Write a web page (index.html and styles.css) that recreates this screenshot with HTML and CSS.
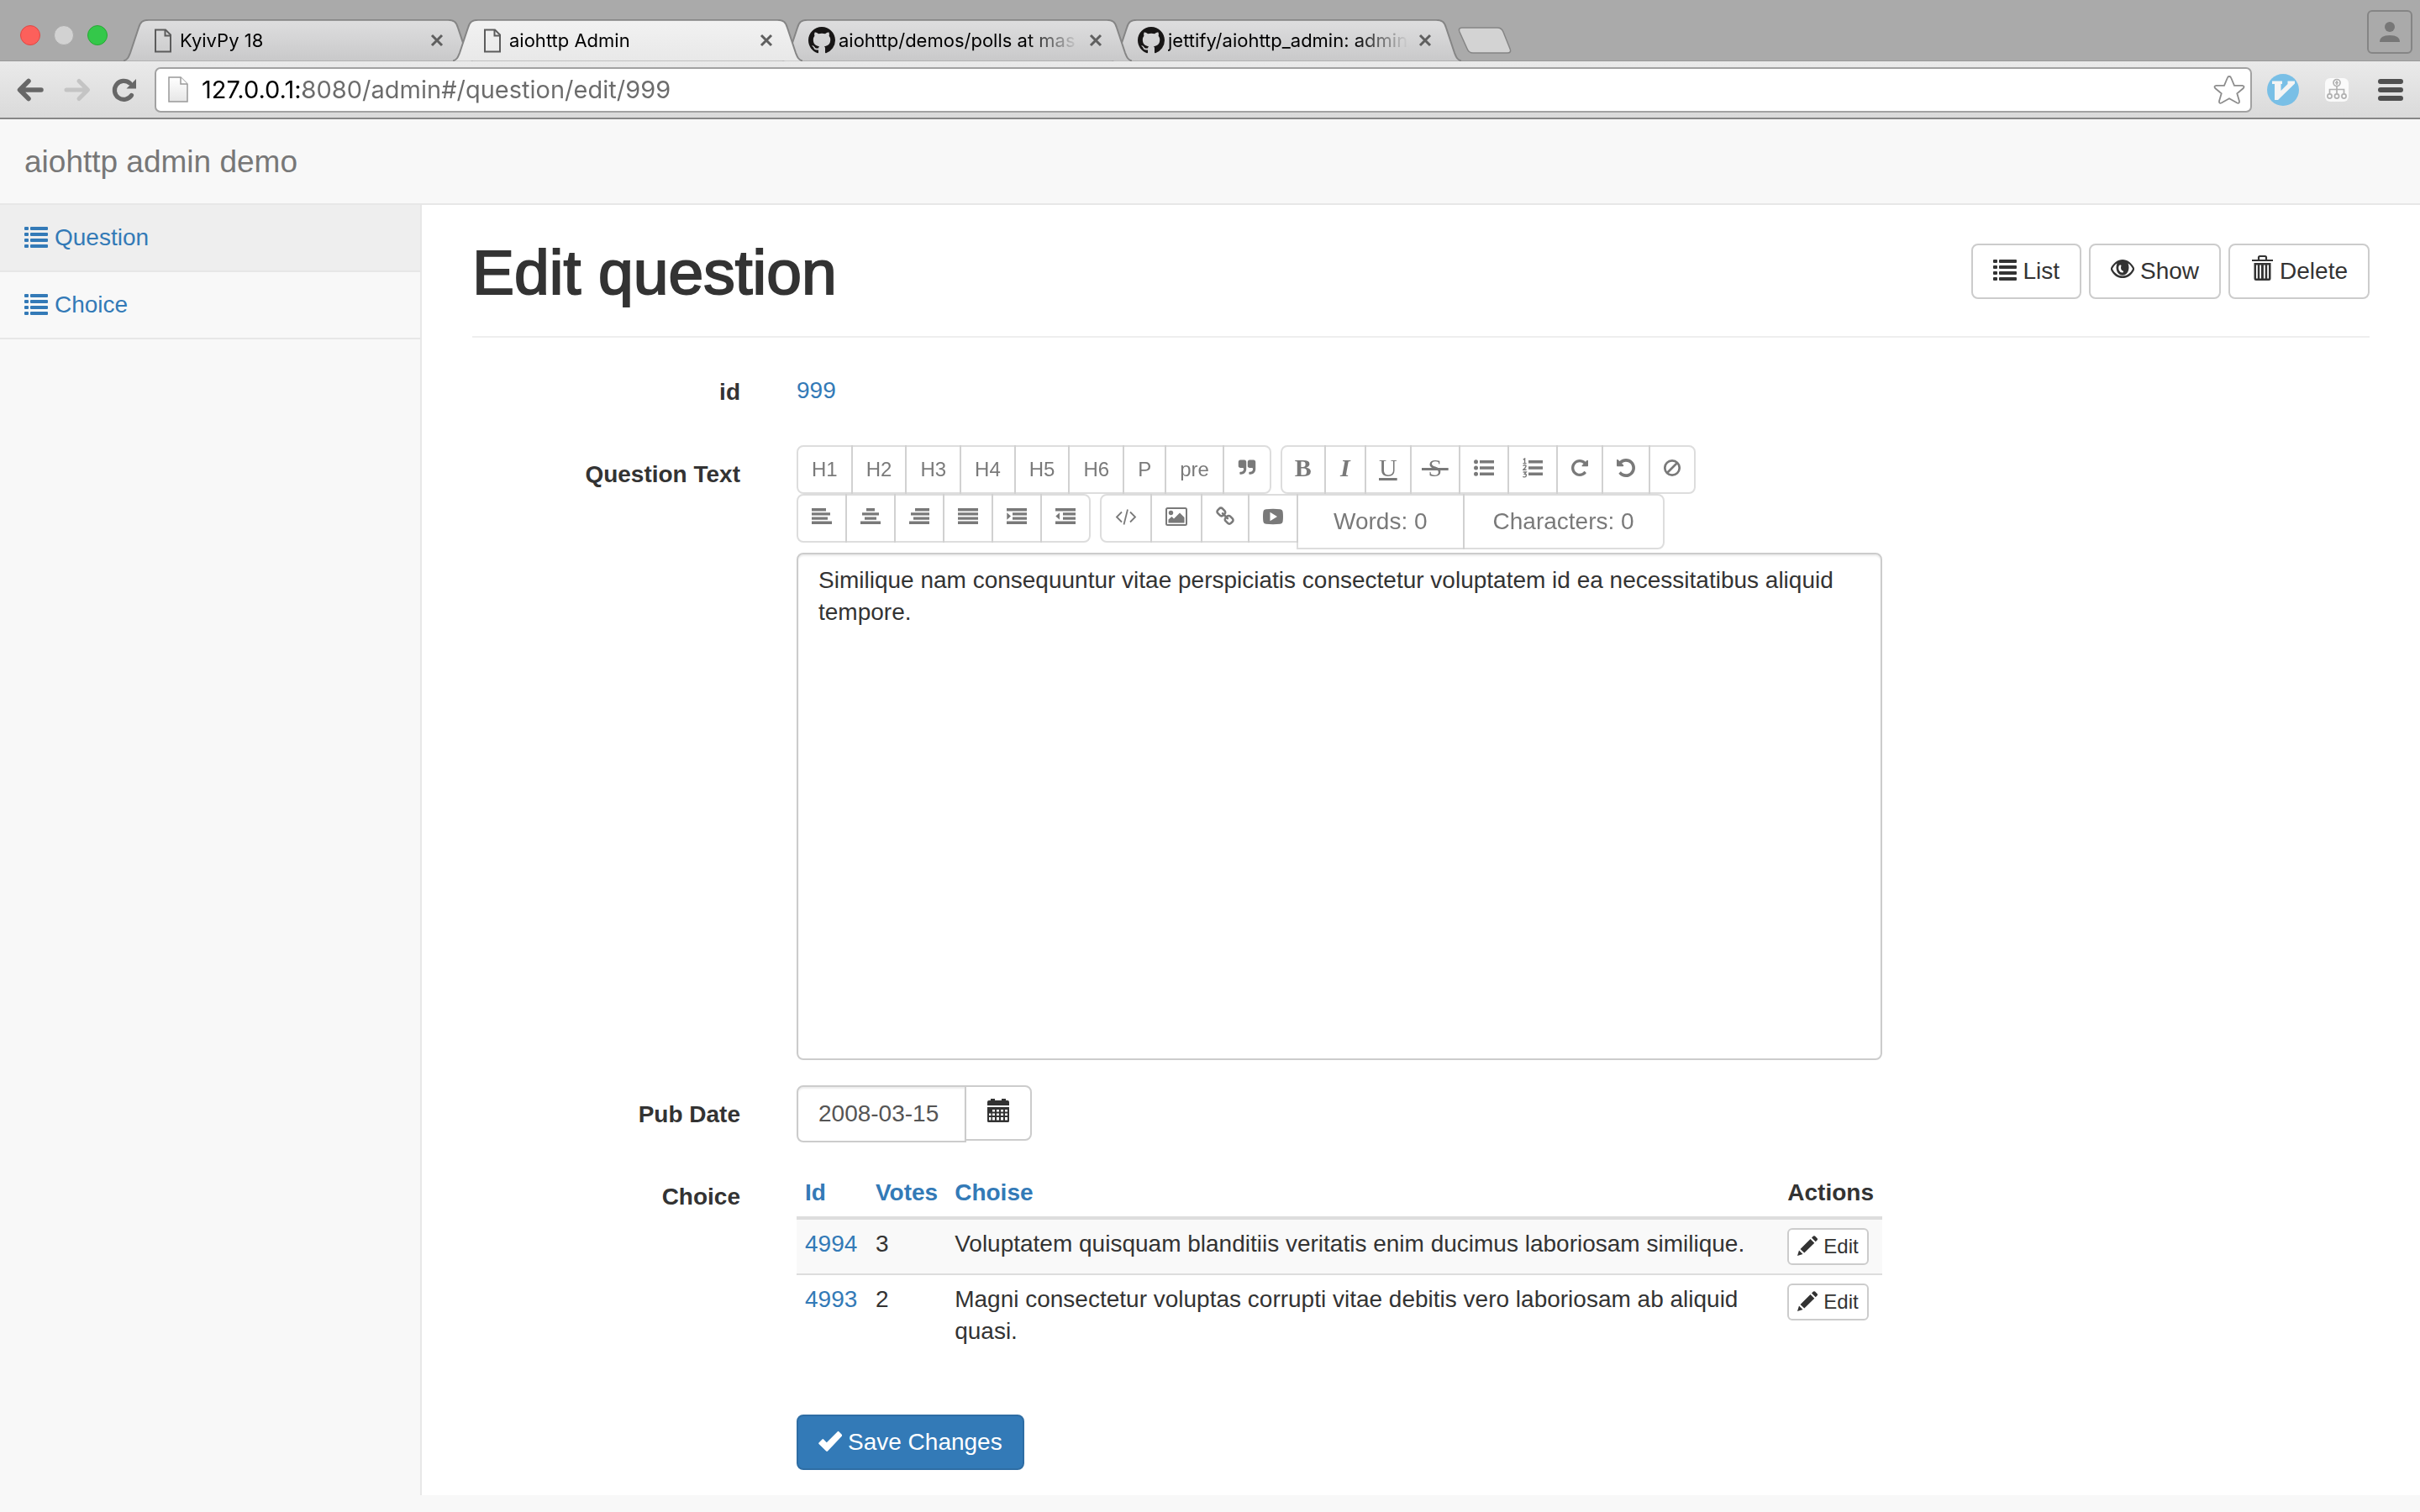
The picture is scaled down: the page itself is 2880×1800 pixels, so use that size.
FILE: index.html
```html
<!DOCTYPE html>
<html lang="en">
<head>
<meta charset="utf-8">
<title>aiohttp Admin</title>
<link rel="stylesheet" href="styles.css">
</head>
<body>
<svg class="defs" aria-hidden="true">
  <defs>
    <linearGradient id="tab-idle" x1="0" y1="0" x2="0" y2="1"><stop offset="0" stop-color="#dededf"/><stop offset="1" stop-color="#c9c9ca"/></linearGradient>
    <linearGradient id="tab-on" x1="0" y1="0" x2="0" y2="1"><stop offset="0" stop-color="#f2f2f2"/><stop offset="1" stop-color="#e8e8e8"/></linearGradient>
    <linearGradient id="sheet" x1="0" y1="0" x2="0" y2="1"><stop offset="0" stop-color="#fff"/><stop offset="1" stop-color="#e6e6e6"/></linearGradient>
  </defs>
  <symbol id="tab-shape" viewBox="0 0 416 50"><path d="M0 49.500C5 48 6 45 8 40L18 10C20 3 23 .8 30 .8H386C393 .8 396 3 398 10L408 40C410 45 411 48 416 49.500"/></symbol>
  <symbol id="page" viewBox="0 0 32 32"><path d="M7 3.500h12l6 6v20H7z" fill="none" stroke="#5c5c5c" stroke-width="2"/><path d="M18.500 4v6.500H25" fill="none" stroke="#5c5c5c" stroke-width="2"/></symbol>
  <symbol id="github" viewBox="0 0 16 16"><path fill="#181616" d="M8 0C3.580 0 0 3.580 0 8c0 3.540 2.290 6.530 5.470 7.590.4.07.55-.17.55-.38 0-.19-.01-.82-.01-1.490-2.010.37-2.530-.49-2.690-.94-.09-.23-.48-.94-.82-1.130-.28-.15-.68-.52-.01-.53.63-.01 1.080.58 1.230.82.72 1.210 1.870.87 2.330.66.07-.52.28-.87.51-1.070-1.780-.2-3.640-.89-3.640-3.950 0-.87.31-1.590.82-2.150-.08-.2-.36-1.020.08-2.120 0 0 .67-.21 2.200.82.64-.18 1.320-.27 2-.27s1.360.09 2 .27c1.530-1.040 2.200-.82 2.200-.82.44 1.100.16 1.920.08 2.120.51.56.82 1.270.82 2.150 0 3.070-1.870 3.750-3.650 3.950.29.25.54.73.54 1.480 0 1.070-.01 1.930-.01 2.200 0 .21.15.46.55.38A8.010 8.010 0 0 0 16 8c0-4.420-3.580-8-8-8z"/></symbol>
  <symbol id="close" viewBox="0 0 16 16"><path d="M2 2l12 12M14 2L2 14" stroke="#5f5f5f" stroke-width="3" fill="none"/></symbol>
  <symbol id="list" viewBox="0 0 28 28"><path d="M1 1h3a1 1 0 0 1 1 1v2a1 1 0 0 1-1 1H1a1 1 0 0 1-1-1V2a1 1 0 0 1 1-1zM8 1h19a1 1 0 0 1 1 1v2a1 1 0 0 1-1 1H8a1 1 0 0 1-1-1V2a1 1 0 0 1 1-1zM1 8h3a1 1 0 0 1 1 1v2a1 1 0 0 1-1 1H1a1 1 0 0 1-1-1V9a1 1 0 0 1 1-1zM8 8h19a1 1 0 0 1 1 1v2a1 1 0 0 1-1 1H8a1 1 0 0 1-1-1V9a1 1 0 0 1 1-1zM1 15h3a1 1 0 0 1 1 1v2a1 1 0 0 1-1 1H1a1 1 0 0 1-1-1v-2a1 1 0 0 1 1-1zM8 15h19a1 1 0 0 1 1 1v2a1 1 0 0 1-1 1H8a1 1 0 0 1-1-1v-2a1 1 0 0 1 1-1zM1 22h3a1 1 0 0 1 1 1v2a1 1 0 0 1-1 1H1a1 1 0 0 1-1-1v-2a1 1 0 0 1 1-1zM8 22h19a1 1 0 0 1 1 1v2a1 1 0 0 1-1 1H8a1 1 0 0 1-1-1v-2a1 1 0 0 1 1-1z"/></symbol>
  <symbol id="eye" viewBox="0 0 28 28"><path fill-rule="evenodd" d="M14 1C8 1 2.500 5.500-.5 12 2.500 19.500 8 23 14 23s11.500-3.500 14.500-11C25.500 5.500 20 1 14 1zM7.500 5.500C6 9 6 14 9 17.500 12 20.500 16 20.500 19 17.500 22 14 22 9 20.500 5.500c2.500 1.500 4.500 4 5.500 6.500-2.500 5.500-7 8.500-12 8.500S4.500 17.500 2 12c1-2.500 3-5 5.500-6.500zM9.500 9c-.8 3 .3 7 4 7.500 1.500 0 2-1 1-2-2.500-1-3-3.500-2-6.500-1-.8-2.300-.5-3 1z"/></symbol>
  <symbol id="trash" viewBox="0 0 28 28" overflow="visible"><path d="M10 2V-1.500Q10-3 11.500-3H17.500Q19-3 19 -1.500V2M2 2H27" fill="none" stroke="currentColor" stroke-width="2.200"/><path fill-rule="evenodd" d="M4.500 5H24.500V23.500q0 2.500-2.500 2.500H7Q4.500 26 4.500 23.500zM7 7.500v16h1.800v-16zM11.200 7.500v16H13v-16zM15.900 7.500v16h1.800v-16zM20.200 7.500v16H22v-16z"/></symbol>
  <symbol id="calendar" viewBox="0 0 28 28"><path d="M1 8V4q0-2 2-2h2V0h5v2h8V0h5v2h2q2 0 2 2v4z"/><path fill-rule="evenodd" d="M1 10h26v16.500q0 1.500-1.500 1.500h-23Q1 28 1 26.500zM7 13v2.500h3V13zM12 13v2.500h3V13zM17 13v2.500h3V13zM22 13v2.500h3V13zM3 17.500V20h2.500v-2.500zM7 17.500V20h3v-2.500zM12 17.500V20h3v-2.500zM17 17.500V20h3v-2.500zM22 17.500V20h3v-2.500zM3 22v3.500h2.500V22zM7 22v3.500h3V22zM12 22v3.500h3V22zM17 22v3.500h3V22zM22 22v3.500h3V22z"/></symbol>
  <symbol id="pencil" viewBox="0 0 24 24"><path d="M0 24L2 17.500 6.500 22zM3.500 16L15.500 4l4.800 4.800L8.300 20.600zM17 2.500L19 .6q1-.9 2 0L23.700 3.200q.8 1 0 2L21.700 7.200z"/></symbol>
  <symbol id="check" viewBox="0 0 28 28"><path d="M.5 15.500L4.500 11.500q.8-.8 1.600 0L9.800 15.200 22.800 2.200q.8-.8 1.500 0L28 6q.7.8 0 1.600L11 25.500q-.9.8-1.800 0L.5 17q-.7-.7 0-1.500z"/></symbol>
  <symbol id="quote" viewBox="0 0 1792 1792"><path id="q" d="M832 320v704q0 104-40.500 198.500t-109.500 163.500-163.500 109.500-198.500 40.500h-64q-26 0-45-19t-19-45v-128q0-26 19-45t45-19h64q106 0 181-75t75-181v-32q0-40-28-68t-68-28h-224q-80 0-136-56t-56-136v-384q0-80 56-136t136-56h384q80 0 136 56t56 136z"/><use href="#q" x="896"/></symbol>
  <symbol id="repeat" viewBox="128 128 1536 1536"><path id="r" d="M1664 256v448q0 26-19 45t-45 19h-448q-42 0-59-40-17-39 14-69l138-138q-148-137-349-137-104 0-198.500 40.500t-163.500 109.500-109.500 163.500-40.500 198.500 40.500 198.500 109.500 163.500 163.500 109.500 198.500 40.500q119 0 225-52t179-147q7-10 23-12 15 0 25 9l137 138q9 8 9.500 20.500t-7.500 22.500q-109 132-264 204.500t-327 72.500q-156 0-298-61t-245-164-164-245-61-298 61-298 164-245 245-164 298-61q147 0 284.500 55.500t244.500 156.500l130-129q29-31 70-14 39 17 39 59z"/></symbol>
  <symbol id="undo" viewBox="128 128 1536 1536"><use href="#r" transform="matrix(-1 0 0 1 1792 0)"/></symbol>
  <symbol id="ban" viewBox="2 2 20 20"><circle cx="12" cy="12" r="8.700" fill="none" stroke="currentColor" stroke-width="2.700"/><path d="M18 6L6 18" stroke="currentColor" stroke-width="2.700"/></symbol>
  <symbol id="ul" viewBox="0 0 24 24"><circle cx="2.500" cy="4.700" r="2.500"/><circle cx="2.500" cy="12" r="2.500"/><circle cx="2.500" cy="19.300" r="2.500"/><path d="M7 3h17v3.400H7zM7 10.300h17v3.400H7zM7 17.600h17V21H7z"/></symbol>
  <symbol id="ol" viewBox="0 0 24 24"><path d="M7 3h17v3.400H7zM7 10.300h17v3.400H7zM7 17.600h17V21H7z"/><path d="M.5 6.600h4M2.600 6.500V1L.8 2.200M.6 9.800Q1 8.600 2.500 8.600 4.200 8.700 4 10.200 3.800 11.600.8 14.300H4.600M.6 17h3.600L2.400 19.300q2 0 2 1.700-.2 1.900-2 1.900-1.400 0-2-.8" fill="none" stroke="currentColor" stroke-width="1.400"/></symbol>
  <symbol id="al" viewBox="0 0 24 24"><path d="M0 2h17v3.400H0zM0 7.200h22v3.400H0zM0 12.400h19v3.400H0zM0 17.600h24V21H0z"/></symbol>
  <symbol id="ac" viewBox="0 0 24 24"><path d="M7 2h10v3.400H7zM2 7.200h20v3.400H2zM5 12.400h14v3.400H5zM0 17.600h24V21H0z"/></symbol>
  <symbol id="ar" viewBox="0 0 24 24"><path d="M7 2h17v3.400H7zM2 7.200h22v3.400H2zM5 12.400h19v3.400H5zM0 17.600h24V21H0z"/></symbol>
  <symbol id="aj" viewBox="0 0 24 24"><path d="M0 2h24v3.400H0zM0 7.200h24v3.400H0zM0 12.400h24v3.400H0zM0 17.600h24V21H0z"/></symbol>
  <symbol id="indent" viewBox="0 0 24 24"><path d="M0 2h24v3.400H0zM7 7.200h17v3.400H7zM7 12.400h17v3.400H7zM0 17.600h24V21H0zM.3 7.300L5 11.500.3 15.700z"/></symbol>
  <symbol id="outdent" viewBox="0 0 24 24"><path d="M0 2h24v3.400H0zM9 7.200h15v3.400H9zM9 12.400h15v3.400H9zM0 17.600h24V21H0zM5 7.300L.3 11.500 5 15.700z"/></symbol>
  <symbol id="code" viewBox="0 0 26 24"><path d="M8 6.500L2 12.500l6 6M18 6.500l6 6-6 6M15 3.500l-4.500 18" fill="none" stroke="currentColor" stroke-width="1.800"/></symbol>
  <symbol id="image" viewBox="0 0 26 24"><rect x="1" y="2" width="24" height="20" rx="1.500" fill="none" stroke="currentColor" stroke-width="2"/><circle cx="6.500" cy="7.500" r="2.700"/><path d="M3.500 19.500v-4l4-3.500 2.500 2.500L17 7.500l5.500 5.500v6.500z"/></symbol>
  <symbol id="link" viewBox="64 64 1664 1664"><path d="M1520 1216q0-40-28-68l-208-208q-28-28-68-28-42 0-72 32 3 3 19 18.500t21.500 21.500 15 19 13 25.500 3.500 27.500q0 40-28 68t-68 28q-15 0-27.500-3.500t-25.500-13-19-15-21.500-21.500-18.500-19q-33 31-33 73 0 40 28 68l206 207q27 27 68 27 40 0 68-26l147-146q28-28 28-67zm-703-705q0-40-28-68l-206-207q-28-28-68-28-39 0-68 27l-147 146q-28 28-28 67 0 40 28 68l208 208q27 27 68 27 42 0 72-31-3-3-19-18.500t-21.500-21.500-15-19-13-25.500-3.500-27.500q0-40 28-68t68-28q15 0 27.500 3.500t25.500 13 19 15 21.500 21.500 18.500 19q33-31 33-73zm895 705q0 120-85 203l-147 146q-83 83-203 83-121 0-204-85l-206-207q-83-83-83-203 0-123 88-209l-88-88q-86 88-208 88-120 0-204-84l-208-208q-84-84-84-204t85-203l147-146q83-83 203-83 121 0 204 85l206 207q83 83 83 203 0 123-88 209l88 88q86-88 208-88 120 0 204 84l208 208q84 84 84 204z"/></symbol>
  <symbol id="video" viewBox="0 0 24 24"><path fill-rule="evenodd" d="M3.500 3.200Q12 2.400 20.500 3.200 23.200 3.500 23.600 6q.8 6 0 12-.4 2.600-3.100 2.800-8.500.8-17 0Q.8 20.600.4 18-.4 12 .4 6 .8 3.500 3.500 3.200zM8.500 6.800v10.400L17 12z"/></symbol>
</svg>

<header class="browser">
  <div class="tabstrip">
    <div class="lights"><span class="light light-red"></span><span class="light light-grey"></span><span class="light light-green"></span></div>
    <ul class="tabs">
      <li class="tab tab-first"><svg class="tab-bg"><use href="#tab-shape"/></svg><svg class="favicon"><use href="#page"/></svg><span class="tab-title">KyivPy 18</span><button class="tab-close" aria-label="Close tab"><svg><use href="#close"/></svg></button></li>
      <li class="tab tab-active"><svg class="tab-bg"><use href="#tab-shape"/></svg><svg class="favicon"><use href="#page"/></svg><span class="tab-title">aiohttp Admin</span><button class="tab-close" aria-label="Close tab"><svg><use href="#close"/></svg></button></li>
      <li class="tab tab-third"><svg class="tab-bg"><use href="#tab-shape"/></svg><svg class="favicon"><use href="#github"/></svg><span class="tab-title">aiohttp/demos/polls at mas</span><button class="tab-close" aria-label="Close tab"><svg><use href="#close"/></svg></button></li>
      <li class="tab"><svg class="tab-bg"><use href="#tab-shape"/></svg><svg class="favicon"><use href="#github"/></svg><span class="tab-title">jettify/aiohttp_admin: admin</span><button class="tab-close" aria-label="Close tab"><svg><use href="#close"/></svg></button></li>
    </ul>
    <button class="new-tab" aria-label="New tab"><svg viewBox="0 0 64 32"><path d="M5 1H47Q52 1 54 6L62 26Q64 31 59 31H18Q13 31 11 26L2 6Q0 1 5 1z" fill="#d3d3d3" stroke="#858585" stroke-width="1.500"/></svg></button>
    <button class="profile" aria-label="Profile"><svg viewBox="0 0 24 26"><circle cx="12" cy="7" r="6"/><path d="M0 25q0-8 12-8t12 8z"/></svg></button>
  </div>
  <div class="toolbar">
    <button class="nav" aria-label="Back"><svg viewBox="0 0 32 28"><path fill="none" stroke="#676767" stroke-width="5.500" stroke-linecap="round" stroke-linejoin="round" d="M29 14H4M14 3.500L3.500 14 14 24.500"/></svg></button>
    <button class="nav" aria-label="Forward"><svg viewBox="0 0 32 28"><path fill="none" stroke="#c4c4c4" stroke-width="5" stroke-linecap="round" stroke-linejoin="round" d="M3 14H28M18 3.500L28.500 14 18 24.500"/></svg></button>
    <button class="nav" aria-label="Reload"><svg viewBox="0 0 32 28"><path d="M24.500 20.500A11 11 0 1 1 22.500 6" fill="none" stroke="#676767" stroke-width="5.200" stroke-linecap="round"/><path d="M30 1V12.500H18.500z" fill="#676767"/></svg></button>
    <div class="address">
      <svg class="sheet" viewBox="0 0 24 32"><path d="M1 1h14l8 8v21H1z" fill="url(#sheet)" stroke="#999" stroke-width="1.500"/><path d="M15 1v8h8" fill="#fff" stroke="#999" stroke-width="1.500"/></svg>
      <input class="url" type="text" aria-label="Address" value="127.0.0.1:8080/admin#/question/edit/999">
      <button class="star" aria-label="Bookmark"><svg viewBox="0 0 38 36"><path d="M19 2q1.600 0 2.200 1.800L25 12.800H34.500q3.500.6 1 3.500L28.300 22.200 31 31.500q.2 3.300-2.700 2L19 28.200 9.700 33.500q-2.900 1.300-2.700-2L9.700 22.200 2.500 16.300q-2.500-2.900 1-3.500H13L16.800 3.800Q17.400 2 19 2z" fill="#fff" stroke="#8d8d8d" stroke-width="1.800"/></svg></button>
    </div>
    <div class="extensions">
      <button aria-label="Vimium"><svg viewBox="0 0 38 38"><circle cx="19" cy="19" r="19" fill="#79bfe6"/><path d="M6 8.500H18V12H16.500V20L24.500 12V8.500H33V11.500L13 31H9V12H6z" fill="#f4f4f4"/></svg></button>
      <button aria-label="Site map"><svg viewBox="0 0 38 38"><rect x="5" y="5" width="28" height="28" rx="6" fill="#fafafa"/><g fill="none" stroke="#b1b1b1" stroke-width="1.700"><circle cx="19" cy="10.500" r="4"/><path d="M19 8v5M17 10.500h4M19 14.500v9M10.500 23.500V18.500h17v5"/><circle cx="10.500" cy="26.500" r="2.600"/><circle cx="19" cy="26.500" r="2.600"/><circle cx="27.500" cy="26.500" r="2.600"/></g></svg></button>
      <button aria-label="Menu"><svg viewBox="0 0 38 38"><path stroke="#4f4f4f" stroke-width="6" stroke-linecap="round" d="M7 9h24M7 19h24M7 29h24"/></svg></button>
    </div>
  </div>
</header>

<nav class="navbar"><a class="brand" href="#/">aiohttp admin demo</a></nav>

<div class="shell">
  <aside class="sidebar">
    <a class="side-link side-link-active" href="#/question"><svg class="icon"><use href="#list"/></svg>Question</a>
    <a class="side-link" href="#/choice"><svg class="icon"><use href="#list"/></svg>Choice</a>
  </aside>

  <main class="page">
    <div class="page-header">
      <h1>Edit question</h1>
      <div class="actions">
        <button class="btn"><svg class="icon"><use href="#list"/></svg>List</button>
        <button class="btn"><svg class="icon"><use href="#eye"/></svg>Show</button>
        <button class="btn"><svg class="icon"><use href="#trash"/></svg>Delete</button>
      </div>
    </div>

    <form class="form">
      <div class="row">
        <span class="label">id</span>
        <div class="static"><a href="#/question/edit/999">999</a></div>
      </div>

      <div class="row">
        <label class="label" for="text">Question Text</label>
        <div>
          <div class="tools">
            <div class="group">
              <button type="button" disabled>H1</button><button type="button" disabled>H2</button><button type="button" disabled>H3</button><button type="button" disabled>H4</button><button type="button" disabled>H5</button><button type="button" disabled>H6</button><button type="button" disabled>P</button><button type="button" disabled>pre</button><button type="button" disabled aria-label="Quote"><svg class="w22"><use href="#quote"/></svg></button>
            </div>
            <div class="group">
              <button type="button" disabled><span class="glyph w18 bold">B</span></button><button type="button" disabled><span class="glyph w14 italic">I</span></button><button type="button" disabled><span class="glyph w20 under">U</span></button><button type="button" disabled><span class="glyph w24 strike">&nbsp;S&nbsp;</span></button><button type="button" disabled aria-label="Bulleted list"><svg><use href="#ul"/></svg></button><button type="button" disabled aria-label="Numbered list"><svg><use href="#ol"/></svg></button><button type="button" disabled aria-label="Redo"><svg class="w20"><use href="#repeat"/></svg></button><button type="button" disabled aria-label="Undo"><svg class="w22"><use href="#undo"/></svg></button><button type="button" disabled aria-label="Clear"><svg class="w20"><use href="#ban"/></svg></button>
            </div>
          </div>
          <div class="tools">
            <div class="group">
              <button type="button" disabled aria-label="Align left"><svg><use href="#al"/></svg></button><button type="button" disabled aria-label="Centre"><svg><use href="#ac"/></svg></button><button type="button" disabled aria-label="Align right"><svg><use href="#ar"/></svg></button><button type="button" disabled aria-label="Justify"><svg><use href="#aj"/></svg></button><button type="button" disabled aria-label="Indent"><svg><use href="#indent"/></svg></button><button type="button" disabled aria-label="Outdent"><svg><use href="#outdent"/></svg></button>
            </div>
            <div class="group">
              <button type="button" disabled aria-label="HTML"><svg class="w26"><use href="#code"/></svg></button><button type="button" disabled aria-label="Image"><svg class="w26"><use href="#image"/></svg></button><button type="button" disabled aria-label="Link"><svg class="w22"><use href="#link"/></svg></button><button type="button" disabled aria-label="Video"><svg><use href="#video"/></svg></button><button type="button" disabled class="count count-words">Words: 0</button><button type="button" disabled class="count">Characters: 0</button>
            </div>
          </div>
          <textarea id="text" class="editor">Similique nam consequuntur vitae perspiciatis consectetur voluptatem id ea necessitatibus aliquid tempore.</textarea>
        </div>
      </div>

      <div class="row">
        <label class="label" for="date">Pub Date</label>
        <div class="date">
          <input id="date" type="text" value="2008-03-15">
          <button type="button" class="btn" aria-label="Pick a date"><svg class="icon"><use href="#calendar"/></svg></button>
        </div>
      </div>

      <div class="row">
        <span class="label">Choice</span>
        <table>
          <thead><tr><th class="col-id"><a href="#id">Id</a></th><th><a href="#votes">Votes</a></th><th class="wide"><a href="#choise">Choise</a></th><th>Actions</th></tr></thead>
          <tbody>
            <tr><td><a href="#/choice/4994">4994</a></td><td>3</td><td>Voluptatem quisquam blanditiis veritatis enim ducimus laboriosam similique.</td><td><button type="button" class="btn btn-small"><svg class="icon"><use href="#pencil"/></svg>Edit</button></td></tr>
            <tr><td><a href="#/choice/4993">4993</a></td><td>2</td><td>Magni consectetur voluptas corrupti vitae debitis vero laboriosam ab aliquid quasi.</td><td><button type="button" class="btn btn-small"><svg class="icon"><use href="#pencil"/></svg>Edit</button></td></tr>
          </tbody>
        </table>
      </div>

      <div class="row row-submit">
        <div class="submit"><button type="submit" class="btn btn-primary"><svg class="icon"><use href="#check"/></svg>Save Changes</button></div>
      </div>
    </form>
  </main>
</div>
</body>
</html>
```
FILE: styles.css
```css
* { box-sizing: border-box; }
body {
  margin: 0;
  background: #f8f8f8;
  color: #333;
  font: 28px/38px "Liberation Sans", Arial, sans-serif;
}
a { color: #337ab7; text-decoration: none; }
button, input, textarea { font: inherit; color: inherit; margin: 0; }
svg { display: block; flex: none; fill: currentColor; overflow: visible; }
.defs { position: absolute; width: 0; height: 0; }

/* Browser window */
.browser { font-family: Inter, Roboto, sans-serif; color: #000; }
.browser button { border: 0; padding: 0; background: none; }
.tabstrip { display: flex; align-items: flex-end; height: 72px; background: #aaa; }
.lights { display: flex; align-items: center; gap: 16px; height: 68px; padding: 8px 0 0 24px; width: 147px; }
.light { width: 24px; height: 24px; border-radius: 50%; }
.light-red { background: #fc605b; border: 1px solid #df4744; }
.light-grey { background: #d2d2d2; border: 1px solid #aaa; }
.light-green { background: #34c84a; border: 1px solid #27a934; }
.tabs { display: flex; margin: 0; padding: 0; list-style: none; }
.tab {
  position: relative;
  isolation: isolate;
  display: flex;
  align-items: center;
  gap: 4px;
  width: 416px;
  height: 49px;
  margin-right: -24px;
  padding: 0 35px 0 31px;
  font-size: 22px;
  line-height: 32px;
}
.tab-first, .tab-third { z-index: 1; }
.tab-active { z-index: 2; }
.tab-bg { position: absolute; left: 0; top: 0; width: 416px; height: 50px; z-index: -1; fill: url(#tab-idle); stroke: #858585; stroke-width: 2px; }
.tab-active .tab-bg { fill: url(#tab-on); }
.favicon { width: 32px; height: 32px; }
.tab-title {
  flex: 1;
  overflow: hidden;
  white-space: nowrap;
  margin-right: 8px;
  mask-image: linear-gradient(90deg, #000 calc(100% - 64px), transparent);
}
.tab-close svg { width: 16px; height: 16px; }
.new-tab { margin: 0 0 8px 20px; z-index: 1; }
.new-tab svg { width: 64px; height: 32px; }
.browser .profile {
  display: grid;
  place-items: center;
  width: 54px;
  height: 52px;
  margin: 0 9px 8px auto;
  border: 2px solid #858585;
  border-radius: 6px;
  color: #777;
}
.profile svg { width: 24px; height: 26px; }
.toolbar {
  display: flex;
  align-items: center;
  height: 70px;
  padding: 0 16px 0 20px;
  background: linear-gradient(#eaeaea, #dadada);
  border-top: 1px solid #999;
  border-bottom: 2px solid #868686;
}
.nav { margin-right: 24px; }
.nav svg { width: 32px; height: 28px; }
.toolbar .nav:nth-child(3) { margin-right: 20px; }
.address {
  display: flex;
  align-items: center;
  flex: 1;
  height: 54px;
  padding: 0 6px 0 14px;
  background: #fff;
  border: 2px solid #a2a2a2;
  border-radius: 7px;
  margin-right: 18px;
}
.sheet { width: 24px; height: 32px; }
.url {
  flex: 1;
  border: 0;
  padding: 0 0 0 16px;
  height: 48px;
  font-size: 29px;
  font-feature-settings: "calt" 0;
  color: transparent;
  background: linear-gradient(90deg, #000 137px, #6b6b6b 137px);
  background-clip: text;
  outline: 0;
}
.star svg { width: 38px; height: 36px; }
.extensions { display: flex; gap: 26px; }
.extensions svg { width: 38px; height: 38px; }

/* Site header and sidebar */
.navbar { display: flex; align-items: center; height: 102px; padding: 2px 29px 0; border-bottom: 2px solid #e7e7e7; }
.brand { color: #777; font-size: 37px; line-height: 40px; }
.shell { display: flex; align-items: flex-start; }
.sidebar { width: 500px; flex: none; }
.side-link { display: flex; align-items: center; gap: 8px; height: 80px; padding: 0 29px; border-bottom: 2px solid #e7e7e7; }
.side-link-active { background: #eee; }
.icon { width: 28px; height: 28px; }

/* Page */
.page { flex: 1; min-width: 0; padding: 40px 60px 30px; background: #fff; border-left: 2px solid #e7e7e7; }
.page-header { display: flex; justify-content: space-between; align-items: flex-start; padding-bottom: 36px; border-bottom: 2px solid #eee; }
h1 { margin: 0; font-size: 75px; line-height: 80px; font-weight: 400; -webkit-text-stroke: 2px #333; }
.actions { display: flex; gap: 9px; padding-top: 6px; }
.btn {
  display: flex;
  align-items: center;
  gap: 7px;
  padding: 12px 24px;
  background: #fff;
  border: 2px solid #ccc;
  border-radius: 8px;
  line-height: 38px;
}
.btn .icon { margin-bottom: 2px; }
.btn-small { padding: 3px 10px; font-size: 24px; line-height: 34px; border-radius: 6px; }
.btn-small .icon { width: 24px; height: 24px; }
.btn-primary { background: #337ab7; border-color: #2e6da4; color: #fff; }

.form { display: flex; flex-direction: column; gap: 30px; padding-top: 30px; }
.row { display: grid; grid-template-columns: 319fr 1292fr 513fr; column-gap: 67px; align-items: start; }
.label { padding-top: 16px; text-align: right; font-weight: 700; }
.static { padding: 14px 0 16px; }
.row-submit { padding-top: 40px; }
.submit { grid-column: 2; display: flex; }

.tools { display: flex; gap: 11px; }
.tools + .editor { margin-top: 4px; }
.group { display: flex; align-items: flex-start; }
.group button {
  display: flex;
  align-items: center;
  height: 58px;
  padding: 0 16px;
  background: #fff;
  border: 2px solid #ccc;
  color: #333;
  opacity: .65;
  font-size: 24px;
  line-height: 34px;
  white-space: nowrap;
}
.group button + button { margin-left: -2px; }
.group button:first-child { border-radius: 8px 0 0 8px; }
.group button:last-child { border-radius: 0 8px 8px 0; }
.group svg { width: 24px; height: 24px; margin-bottom: 4px; }
.group .count { height: 66px; padding: 0 34px; font-size: 28px; }
.group .count-words { padding: 0 42px; }
.glyph { font-family: "Liberation Serif", serif; font-size: 30px; display: flex; justify-content: center; margin-bottom: 4px; }
.bold { font-weight: 700; }
.italic { font-style: italic; font-weight: 700; }
.under { text-decoration: underline; }
.strike { text-decoration: line-through; }
.group .w14 { width: 14px; }
.group .w18 { width: 18px; }
.group .w20 { width: 20px; }
.group .w22 { width: 22px; }
.group .w24 { width: 24px; }
.group .w26 { width: 26px; }

.editor {
  display: block;
  width: 100%;
  height: 604px;
  padding: 12px 24px;
  border: 2px solid #ccc;
  border-radius: 8px;
  background: #fff;
  box-shadow: inset 0 2px 2px rgba(0, 0, 0, .075);
  resize: none;
}
.date { display: flex; align-items: flex-start; }
.date input {
  width: 202px;
  height: 68px;
  padding: 0 24px;
  border: 2px solid #ccc;
  border-radius: 8px 0 0 8px;
  background: #fff;
  color: #555;
  box-shadow: inset 0 2px 2px rgba(0, 0, 0, .075);
}
.date .btn { height: 66px; margin-left: -2px; border-radius: 0 8px 8px 0; }
.date .icon { margin-bottom: 6px; }

table { width: 100%; border-collapse: separate; border-spacing: 0; }
th, td { padding: 10px; text-align: left; vertical-align: top; }
th { padding: 11px 10px 9px; border-bottom: 4px solid #ddd; }
.col-id { min-width: 84px; }
.wide { width: 100%; }
tbody tr:first-child td { background: #f9f9f9; border-bottom: 2px solid #ddd; }
```
